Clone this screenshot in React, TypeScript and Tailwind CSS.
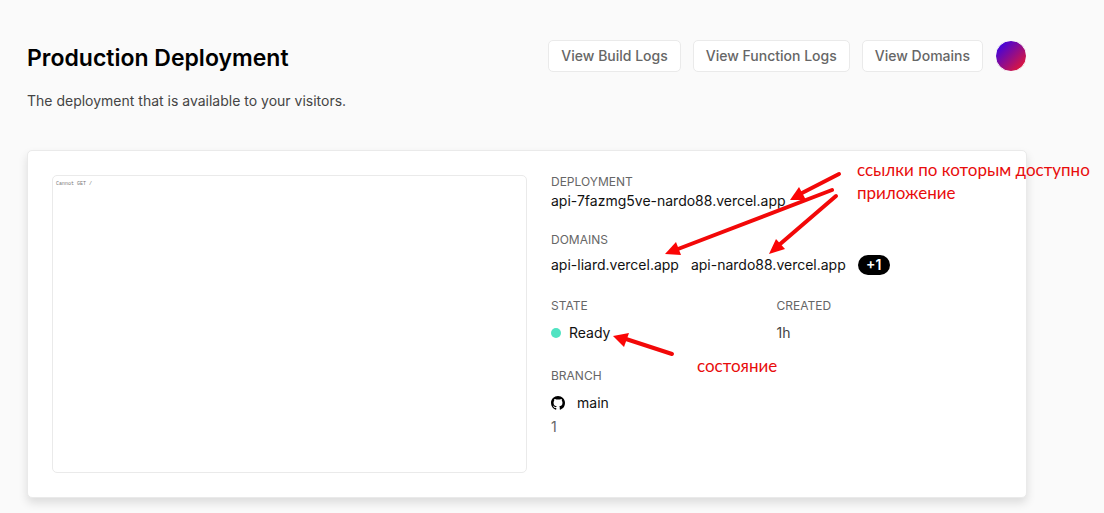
import type { ReactNode } from "react";

function HeaderButton({ children }: { children: ReactNode }) {
  return (
    <button
      type="button"
      className="h-8 rounded-[5px] border border-[#eaeaea] bg-white px-3 text-sm font-medium whitespace-nowrap text-[#666]"
    >
      {children}
    </button>
  );
}

function Label({ children }: { children: ReactNode }) {
  return <h2 className="text-xs leading-[14px] text-[#666]">{children}</h2>;
}

function GithubIcon() {
  return (
    <svg viewBox="0 0 16 16" className="size-[14px]" fill="#000" aria-hidden="true">
      <path d="M8 0C3.58 0 0 3.58 0 8c0 3.54 2.29 6.53 5.47 7.59.4.07.55-.17.55-.38 0-.19-.01-.82-.01-1.49-2.01.37-2.53-.49-2.69-.94-.09-.23-.48-.94-.82-1.13-.28-.15-.68-.52-.01-.53.63-.01 1.08.58 1.23.82.72 1.21 1.87.87 2.33.66.07-.52.28-.87.51-1.07-1.78-.2-3.64-.89-3.64-3.95 0-.87.31-1.59.82-2.15-.08-.2-.36-1.02.08-2.12 0 0 .67-.21 2.2.82a7.6 7.6 0 0 1 4 0c1.53-1.04 2.2-.82 2.2-.82.44 1.1.16 1.92.08 2.12.51.56.82 1.27.82 2.15 0 3.07-1.87 3.75-3.65 3.95.29.25.54.73.54 1.48 0 1.07-.01 1.93-.01 2.2 0 .21.15.46.55.38A8.01 8.01 0 0 0 16 8c0-4.42-3.58-8-8-8z" />
    </svg>
  );
}

function Annotations() {
  return (
    <div className="pointer-events-none absolute top-0 left-0 h-[513px] w-[1104px] font-['Lato','Open_Sans',sans-serif] text-[17px] leading-[23px] text-[#e80c0c]">
      <svg viewBox="0 0 1104 513" className="absolute inset-0 size-full" aria-hidden="true">
        <g stroke="#f20808" strokeWidth="4" strokeLinecap="round">
          <path d="M839 174 802 193" />
          <path d="M832 190 678 249" />
          <path d="M836 196 779 245" />
          <path d="M672 354 626 339" />
        </g>
        <g fill="#fb0505">
          <path d="M790 200 799 187 806 200z" />
          <path d="M665 254 676 242 681 255z" />
          <path d="M769 254 776 239 785 249z" />
          <path d="M613 336 629 333 624 347z" />
        </g>
      </svg>
      <p className="absolute top-[158px] left-[857px] whitespace-nowrap">
        ссылки по которым доступно
        <br />
        приложение
      </p>
      <p className="absolute top-[354px] left-[697px] whitespace-nowrap">состояние</p>
    </div>
  );
}

export default function App() {
  return (
    <main className="relative min-h-screen overflow-hidden bg-[#fafafa] pt-10 pr-[77px] pb-4 pl-[27px] font-['Inter',sans-serif] text-sm text-black">
      <header>
        <div className="flex items-start justify-between">
          <h1 className="text-[23px] leading-9 font-semibold">Production Deployment</h1>
          <div className="flex items-center gap-3">
            <HeaderButton>View Build Logs</HeaderButton>
            <HeaderButton>View Function Logs</HeaderButton>
            <HeaderButton>View Domains</HeaderButton>
            <button
              type="button"
              aria-label="Account"
              className="size-8 rounded-full border border-[#fafafa] bg-[linear-gradient(135deg,#1f00ff,#ff1a1a)] bg-origin-border"
            />
          </div>
        </div>
        <p className="mt-[15px] leading-5 text-[#444]">
          The deployment that is available to your visitors.
        </p>
      </header>

      <section className="mt-[39px] flex rounded-[5px] border border-[#eaeaea] bg-white p-6 shadow-[0_5px_10px_rgba(0,0,0,0.12)]">
        <div className="h-[298px] w-1/2 rounded-[5px] border border-[#eaeaea] p-[3px]">
          <p className="font-['Liberation_Mono',monospace] text-[5px] leading-[10px] text-[#777]">
            Cannot GET /
          </p>
        </div>
        <div className="w-1/2 pl-6">
          <Label>DEPLOYMENT</Label>
          <a href="#deployment" className="block leading-6 text-[#111]">
            api-7fazmg5ve-nardo88.vercel.app
          </a>
          <div className="mt-5">
            <Label>DOMAINS</Label>
            <div className="mt-2 flex items-center gap-3 leading-5 text-[#111]">
              <a href="#liard">api-liard.vercel.app</a>
              <a href="#nardo88">api-nardo88.vercel.app</a>
              <button
                type="button"
                className="h-5 w-8 rounded-full bg-black text-center text-sm leading-5 font-semibold text-white"
              >
                +1
              </button>
            </div>
          </div>
          <div className="mt-6 grid grid-cols-2">
            <div>
              <Label>STATE</Label>
              <p className="mt-2 flex items-center gap-2 leading-6 text-[#111]">
                <span className="size-[10px] rounded-full bg-[#50e3c2]" />
                Ready
              </p>
            </div>
            <div>
              <Label>CREATED</Label>
              <p className="mt-2 leading-6 text-[#444]">1h</p>
            </div>
          </div>
          <div className="mt-6">
            <Label>BRANCH</Label>
            <a href="#main" className="mt-2 flex items-center gap-3 leading-6 text-[#111]">
              <GithubIcon />
              main
            </a>
            <p className="leading-6 text-[#666]">1</p>
          </div>
        </div>
      </section>
      <Annotations />
    </main>
  );
}
